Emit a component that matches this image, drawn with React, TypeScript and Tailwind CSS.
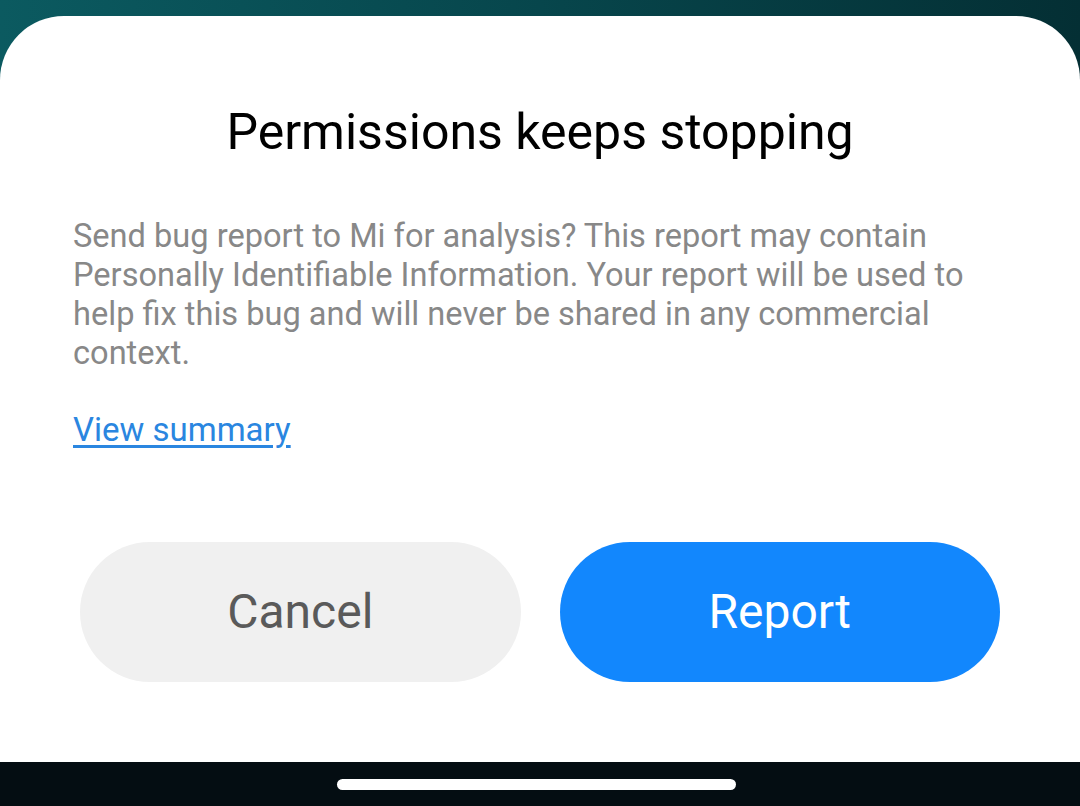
import React from 'react';

const App: React.FC = () => {
  return (
    <div className="w-[1080px] h-[806px] flex flex-col overflow-hidden bg-gradient-to-r from-[#0b5a60] via-[#07464c] to-[#042f34] font-['Roboto',sans-serif]">
      <div className="h-4 shrink-0" />
      <div className="flex-1 bg-white rounded-t-[64px] flex flex-col">
        <h1 className="mt-[86px] text-center text-[50px] leading-[60px] text-black">
          Permissions keeps stopping
        </h1>
        <p className="mt-[55px] px-[73px] text-[32.6px] leading-[39px] text-[#888888]">
          Send bug report to Mi for analysis? This report may contain Personally Identifiable Information. Your report will be used to help fix this bug and will never be shared in any commercial context.
        </p>
        <div className="mt-[37px] px-[73px] leading-[39px]">
          <a className="text-[33px] leading-[39px] text-[#2a86e0] underline underline-offset-[4px]">View summary</a>
        </div>
        <div className="mt-[87px] px-[80px] flex gap-[39px]">
          <button className="flex-1 h-[140px] rounded-full bg-[#f0f0f0] text-[48px] text-[#5a5a5a]">
            Cancel
          </button>
          <button className="flex-1 h-[140px] rounded-full bg-[#1287fd] text-[48px] text-white">
            Report
          </button>
        </div>
      </div>
      <div className="h-[44px] shrink-0 bg-[#040d12] flex items-center justify-center">
        <div className="w-[399px] h-[11px] mr-[7px] rounded-full bg-white" />
      </div>
    </div>
  );
};

export default App;
